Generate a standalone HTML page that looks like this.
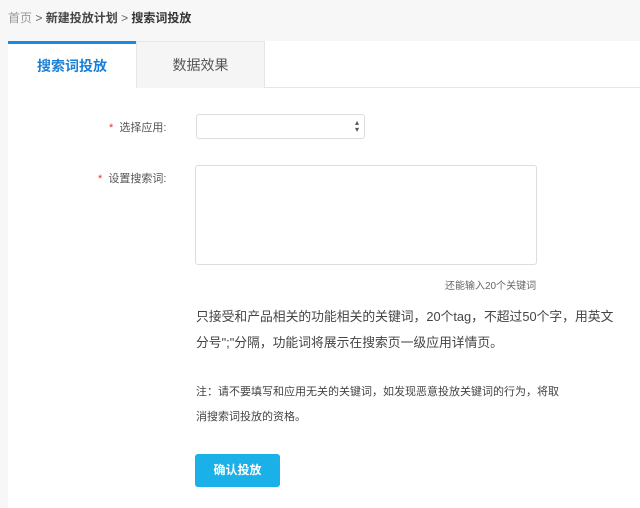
<!DOCTYPE html>
<html><head><meta charset="utf-8"><style>
*{margin:0;padding:0;box-sizing:border-box}
body{width:640px;height:508px;background:#f7f7f7;font-family:"Liberation Sans","Noto Sans CJK SC",sans-serif;position:relative;overflow:hidden;color:#333}
.a{position:absolute;white-space:nowrap}
</style></head><body>
<div class="a" style="left:8px;top:9px;font-size:12px;color:#999">首页 <span style="color:#666">&gt;</span> <span style="color:#444;font-weight:bold">新建投放计划</span> <span style="color:#666">&gt;</span> <span style="color:#333;font-weight:bold">搜索词投放</span></div>
<div class="a" style="left:8px;top:41px;width:632px;height:467px;background:#fff"></div>
<div class="a" style="left:136px;top:41px;width:504px;height:47px;background:#fff;border-bottom:1px solid #e6e6e6"></div>
<div class="a" style="left:136px;top:41px;width:129px;height:47px;background:#f5f5f5;border:1px solid #e6e6e6;border-bottom:none;text-align:center;line-height:46px;font-size:14px;color:#555">数据效果</div>
<div class="a" style="left:8px;top:41px;width:128px;height:48px;background:#fff;border-top:3px solid #1a8be0;text-align:center;line-height:44px;font-size:14px;color:#1a7fd6;font-weight:bold">搜索词投放</div>
<div class="a" style="left:109px;top:119px;font-size:11px;color:#555"><span style="color:#e33">*</span>&nbsp; 选择应用:</div>
<div class="a" style="left:196px;top:114px;width:169px;height:25px;border:1px solid #ddd;border-radius:3px"><span class="a" style="right:5px;top:4px;font-size:8px;line-height:7px;color:#555">▴<br>▾</span></div>
<div class="a" style="left:98px;top:170px;font-size:11px;color:#555"><span style="color:#e33">*</span>&nbsp; 设置搜索词:</div>
<div class="a" style="left:195px;top:165px;width:342px;height:100px;border:1px solid #ddd;border-radius:3px"></div>
<div class="a" style="left:445px;top:277px;font-size:10px;color:#666">还能输入20个关键词</div>
<div class="a" style="left:196px;top:304px;font-size:12.8px;line-height:26px;color:#444">只接受和产品相关的功能相关的关键词，20个tag，不超过50个字，用英文<br>分号";"分隔，功能词将展示在搜索页一级应用详情页。</div>
<div class="a" style="left:196px;top:380px;font-size:11px;line-height:25px;color:#444">注：请不要填写和应用无关的关键词，如发现恶意投放关键词的行为，将取<br>消搜索词投放的资格。</div>
<div class="a" style="left:195px;top:454px;width:85px;height:33px;background:#1ab0e8;border-radius:3px;color:#fff;font-size:12px;font-weight:bold;text-align:center;line-height:33px">确认投放</div>
</body></html>
